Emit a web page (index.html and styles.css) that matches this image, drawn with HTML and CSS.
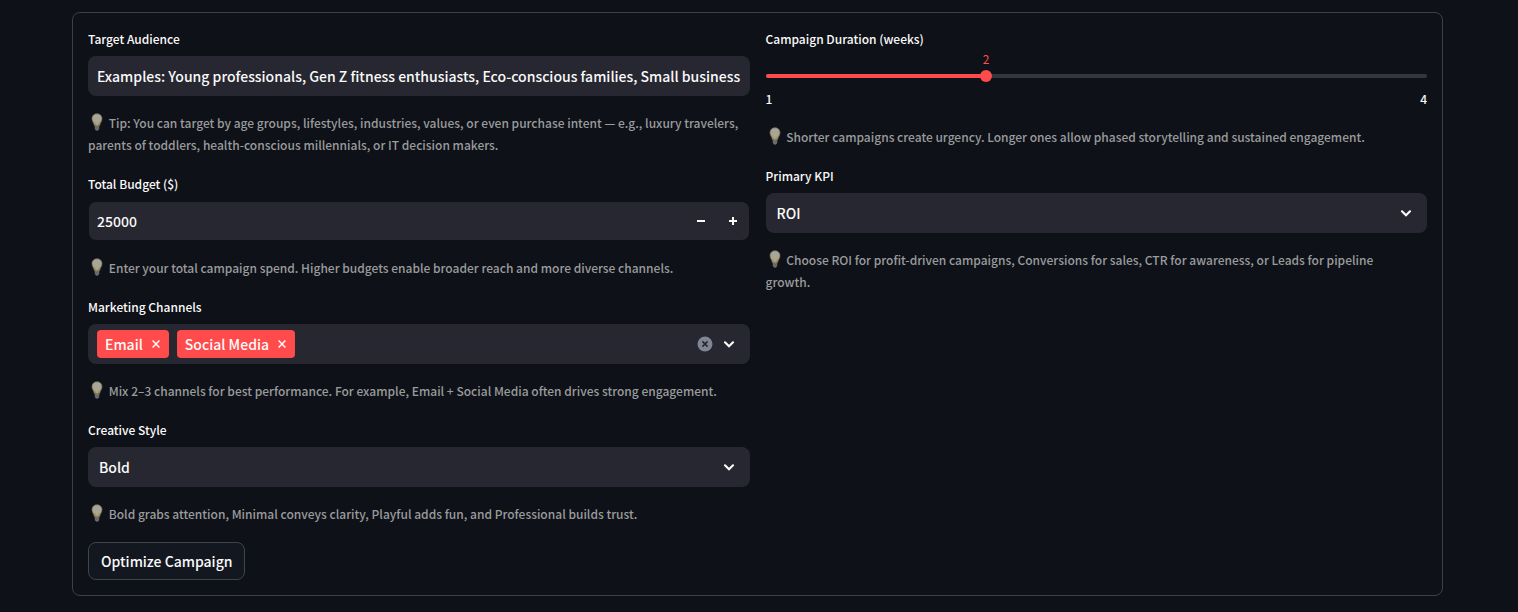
FILE: index.html
```html
<!DOCTYPE html>
<html lang="en">
<head>
<meta charset="utf-8">
<meta name="viewport" content="width=device-width, initial-scale=1">
<title>Campaign Optimizer</title>
<link rel="stylesheet" href="styles.css">
</head>
<body>
<svg class="sprite" aria-hidden="true">
  <defs>
    <linearGradient id="glass" x1="0" y1="0" x2="0" y2="1">
      <stop offset="0" stop-color="#a6a6a0"/>
      <stop offset="0.6" stop-color="#a9a596"/>
      <stop offset="1" stop-color="#968657"/>
    </linearGradient>
    <symbol id="bulb" viewBox="0 0 18 18">
      <path d="M9 .8c-3 0-5 2.100-5 4.900 0 2.600 2 4.100 2.400 7.100h5.200c.4-3 2.400-4.500 2.400-7.100C14 2.900 12 .8 9 .8z" fill="url(#glass)" stroke="#7d7045" stroke-width=".7"/>
      <path d="M8 7.500l.5 5M10 7.500l-.5 5" stroke="#b9b291" stroke-width=".6" fill="none"/>
      <path d="M6.800 12.800h4.400v3.200l-1.200 1.500H8l-1.200-1.500z" fill="#77797b"/>
      <path d="M6.800 14.300h4.400M6.800 15.800h4.400" stroke="#4d4f54" stroke-width=".5"/>
    </symbol>
    <symbol id="chevron" viewBox="0 0 24 24">
      <path d="M8 10.300l4 3.900 4-3.900" fill="none" stroke="#fafafa" stroke-width="2.200" stroke-linecap="round"/>
    </symbol>
    <symbol id="cross" viewBox="0 0 8 8">
      <path d="M.6.600l6.800 6.800M7.400.600L.6 7.400" fill="none" stroke="#fff" stroke-width="1.400"/>
    </symbol>
  </defs>
</svg>

<form class="form">
  <div class="columns">
    <div class="column">
      <div class="field">
        <label class="label" for="audience">Target Audience</label>
        <input class="control text-input" id="audience" type="text" value="Examples: Young professionals, Gen Z fitness enthusiasts, Eco-conscious families, Small business">
        <p class="tip"><svg class="bulb"><use href="#bulb"/></svg> Tip: You can target by age groups, lifestyles, industries, values, or even purchase intent — e.g., luxury travelers, parents of toddlers, health-conscious millennials, or IT decision makers.</p>
      </div>

      <div class="field">
        <label class="label" for="budget">Total Budget ($)</label>
        <div class="control number">
          <input class="number-input" id="budget" type="text" inputmode="numeric" value="25000">
          <button class="step" type="button" aria-label="Decrease budget"><svg width="10" height="10"><path d="M1 5h8" stroke="#fafafa" stroke-width="2"/></svg></button>
          <button class="step" type="button" aria-label="Increase budget"><svg width="10" height="10"><path d="M1 5h8M5 1v8" stroke="#fafafa" stroke-width="2"/></svg></button>
        </div>
        <p class="tip"><svg class="bulb"><use href="#bulb"/></svg> Enter your total campaign spend. Higher budgets enable broader reach and more diverse channels.</p>
      </div>

      <div class="field">
        <span class="label" id="channels">Marketing Channels</span>
        <div class="control multi" role="group" aria-labelledby="channels">
          <span class="tag">Email<button class="tag-remove" type="button" aria-label="Remove Email"><svg width="8" height="8"><use href="#cross"/></svg></button></span>
          <span class="tag">Social Media<button class="tag-remove" type="button" aria-label="Remove Social Media"><svg width="8" height="8"><use href="#cross"/></svg></button></span>
          <button class="icon-button clear" type="button" aria-label="Clear all"><svg width="16" height="16"><circle cx="8" cy="8" r="7.500" fill="#808495"/><path d="M5.400 5.400l5.200 5.200M10.600 5.400l-5.200 5.200" stroke="#262730" stroke-width="1.600"/></svg></button>
          <button class="icon-button" type="button" aria-label="Open channels"><svg width="24" height="24"><use href="#chevron"/></svg></button>
        </div>
        <p class="tip"><svg class="bulb"><use href="#bulb"/></svg> Mix 2–3 channels for best performance. For example, Email + Social Media often drives strong engagement.</p>
      </div>

      <div class="field">
        <label class="label" for="style">Creative Style</label>
        <div class="select-wrap">
          <select class="control select" id="style"><option>Bold</option><option>Minimal</option><option>Playful</option><option>Professional</option></select>
          <svg class="select-icon"><use href="#chevron"/></svg>
        </div>
        <p class="tip"><svg class="bulb"><use href="#bulb"/></svg> Bold grabs attention, Minimal conveys clarity, Playful adds fun, and Professional builds trust.</p>
      </div>

      <button class="submit" type="submit">Optimize Campaign</button>
    </div>

    <div class="column">
      <div class="field">
        <label class="label" for="duration">Campaign Duration (weeks)</label>
        <div class="slider">
          <div class="track"><div class="fill" style="width: 33.333%"></div></div>
          <output class="slider-value" for="duration" style="left: 33.333%">2</output>
          <input class="range" id="duration" type="range" min="1" max="4" value="2">
          <div class="ticks"><span>1</span><span>4</span></div>
        </div>
        <p class="tip"><svg class="bulb"><use href="#bulb"/></svg> Shorter campaigns create urgency. Longer ones allow phased storytelling and sustained engagement.</p>
      </div>

      <div class="field">
        <label class="label" for="kpi">Primary KPI</label>
        <div class="select-wrap">
          <select class="control select" id="kpi"><option>ROI</option><option>Conversions</option><option>CTR</option><option>Leads</option></select>
          <svg class="select-icon"><use href="#chevron"/></svg>
        </div>
        <p class="tip"><svg class="bulb"><use href="#bulb"/></svg> Choose ROI for profit-driven campaigns, Conversions for sales, CTR for awareness, or Leads for pipeline growth.</p>
      </div>
    </div>
  </div>
</form>
</body>
</html>
```

FILE: styles.css
```css
* { box-sizing: border-box; }

body {
  margin: 0;
  padding: 12px 75px 16px 72px;
  background: #0e1117;
  color: #fafafa;
  font-family: "Noto Sans CJK SC", "Noto Sans", sans-serif;
  font-size: 14px;
  font-weight: 500;
  line-height: 22px;
}

input, select, button { font: inherit; color: inherit; }
button { padding: 0; border: 0; background: none; cursor: pointer; }
svg { display: block; }
.sprite { position: absolute; width: 0; height: 0; }

.form {
  padding: 15px;
  border: 1px solid #3d4045;
  border-radius: 8px;
}

.columns { display: grid; grid-template-columns: 1fr 1fr; gap: 16px; }
.column { display: flex; flex-direction: column; gap: 17px; min-width: 0; }
.field { display: flex; flex-direction: column; }

.label {
  margin-bottom: 6px;
  font-size: 12px;
}

.control {
  width: 100%;
  height: 40px;
  border: 0;
  border-radius: 8px;
  background: #262730;
}

.text-input { padding: 0 9px; }

.number {
  display: flex;
  border: 1px solid #0e1117;
}
.number-input {
  flex: 1;
  min-width: 0;
  padding: 0 8px;
  border: 0;
  background: none;
}
.step { display: grid; place-items: center; width: 32px; }

.multi { display: flex; align-items: center; gap: 8px; padding: 0 9px; }
.tag {
  display: flex;
  align-items: center;
  gap: 9px;
  height: 28px;
  padding: 0 9px 0 8px;
  border-radius: 4px;
  background: #ff4b4b;
}
.icon-button { flex: none; }
.clear { margin-left: auto; margin-right: -4px; }

.select-wrap { position: relative; }
.select { appearance: none; padding: 0 36px 0 11px; }
.select-icon {
  position: absolute;
  top: 8px;
  right: 9px;
  width: 24px;
  height: 24px;
  pointer-events: none;
}

.tip {
  margin: 16px 0 0;
  padding-right: 8px;
  color: #9a9b9d;
  font-size: 12px;
}
.bulb {
  display: inline-block;
  width: 18px;
  height: 18px;
  vertical-align: -3px;
}

.slider {
  display: grid;
  grid-template-rows: 40px 14px;
  height: 54px;
  position: relative;
}
.track {
  grid-area: 1 / 1;
  align-self: center;
  height: 4px;
  border-radius: 4px;
  background: #34363f;
}
.fill { height: 4px; border-radius: 4px; background: #ff4b4b; }
.range {
  grid-area: 1 / 1;
  align-self: center;
  appearance: none;
  width: calc(100% + 12px);
  height: 12px;
  margin: 0 -6px;
  background: none;
}
.range::-webkit-slider-thumb {
  appearance: none;
  width: 12px;
  height: 12px;
  border-radius: 50%;
  background: #ff4b4b;
}
.slider-value {
  position: absolute;
  top: -8px;
  transform: translateX(-50%);
  color: #ff4b4b;
  font-size: 12px;
  font-weight: 400;
}
.ticks {
  grid-area: 2 / 1;
  display: flex;
  justify-content: space-between;
  font-size: 12px;
  line-height: 6px;
}

.submit {
  align-self: flex-start;
  height: 38px;
  padding: 0 12px;
  border: 1px solid #41444c;
  border-radius: 8px;
  background: #131720;
}
```
